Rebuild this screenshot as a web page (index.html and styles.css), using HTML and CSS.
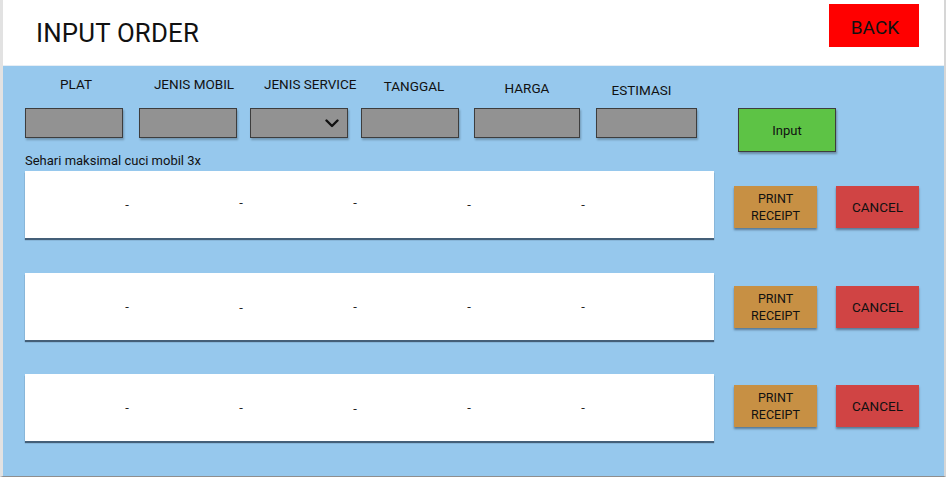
FILE: index.html
```html
<!DOCTYPE html>
<html>
<head>
<meta charset="utf-8">
<link rel="stylesheet" href="styles.css">
</head>
<body>
<div class="app">
  <header class="topbar">
    <h1 class="title">INPUT ORDER</h1>
    <button class="btn-back">BACK</button>
  </header>
  <main class="panel">
    <div class="form-row">
      <div class="field f-plat"><div class="label">PLAT</div><div class="box"></div></div>
      <div class="field f-mobil"><div class="label">JENIS MOBIL</div><div class="box"></div></div>
      <div class="field f-service"><div class="label">JENIS SERVICE</div><div class="box select">
        <svg class="chev" width="14" height="9" viewBox="0 0 14 9"><polyline points="1.5,1.5 7,7 12.5,1.5" fill="none" stroke="#111" stroke-width="2.4" stroke-linecap="round" stroke-linejoin="round"/></svg>
      </div></div>
      <div class="field f-tanggal"><div class="label lbl-low1">TANGGAL</div><div class="box"></div></div>
      <div class="field f-harga"><div class="label lbl-low2">HARGA</div><div class="box"></div></div>
      <div class="field f-estimasi"><div class="label lbl-low3">ESTIMASI</div><div class="box"></div></div>
      <button class="btn-input">Input</button>
    </div>
    <p class="note">Sehari maksimal cuci mobil 3x</p>
    <div class="rows">
      <div class="row row-1">
        <div class="card"><span>-</span><span class="up">-</span><span class="up">-</span><span>-</span><span>-</span></div>
        <button class="btn-print">PRINT<br>RECEIPT</button>
        <button class="btn-cancel">CANCEL</button>
      </div>
      <div class="row row-2">
        <div class="card"><span>-</span><span class="down">-</span><span>-</span><span>-</span><span>-</span></div>
        <button class="btn-print">PRINT<br>RECEIPT</button>
        <button class="btn-cancel">CANCEL</button>
      </div>
      <div class="row row-3">
        <div class="card"><span>-</span><span>-</span><span class="down">-</span><span>-</span><span>-</span></div>
        <button class="btn-print">PRINT<br>RECEIPT</button>
        <button class="btn-cancel">CANCEL</button>
      </div>
    </div>
  </main>
</div>
</body>
</html>
```
FILE: styles.css
```css
* { box-sizing: border-box; }
html, body { margin: 0; padding: 0; background: #ffffff; }
body { font-family: Roboto, "Liberation Sans", sans-serif; color: #111; }

.app {
  width: 946px;
  height: 477px;
  border-left: 3px solid #e2e2e2;
  border-right: 2px solid #d6d6d6;
  border-bottom: 1px solid #8e8e8e;
  display: flex;
  flex-direction: column;
}

.topbar {
  height: 66px;
  background: #fff;
  border-bottom: 1px solid #e6eef5;
  display: flex;
  align-items: flex-start;
  justify-content: space-between;
  padding: 0 25px 0 33px;
}
.title {
  margin: 18px 0 0 0;
  font-size: 25.8px;
  font-weight: 400;
  letter-spacing: 0.2px;
  line-height: 30px;
}
.btn-back {
  margin-top: 4px;
  width: 90px;
  height: 43px;
  background: #ff0000;
  border: 0;
  font-family: inherit;
  font-size: 19px;
  color: #111;
  padding: 4px 0 0 2px;
}

.panel {
  flex: 1;
  background: #96c8ed;
  padding: 10px 0 0 22px;
}

.form-row { display: flex; align-items: flex-start; }
.field { display: flex; flex-direction: column; }
.label {
  font-size: 13.5px;
  line-height: 16px;
  height: 16px;
  text-align: center;
  margin-bottom: 16px;
  white-space: nowrap;
}
.lbl-low1 { transform: translateY(2px); }
.lbl-low2 { transform: translateY(4px); }
.lbl-low3 { transform: translateY(6px); }
.box {
  height: 30px;
  background: #929292;
  border: 1.5px solid #3d3d3d;
  box-shadow: 1px 2px 2px rgba(0,0,0,0.25);
  position: relative;
}
.select { display: flex; align-items: center; justify-content: flex-end; padding-right: 8px; }
.chev { display: block; }

.f-plat { width: 98px; margin-right: 16px; }
.f-plat .label { padding-left: 4px; }
.f-mobil { width: 98px; margin-right: 13px; }
.f-mobil .label { padding-left: 12px; }
.f-service { width: 98px; margin-right: 13px; }
.f-service .label { padding-left: 14px; }
.f-tanggal { width: 98px; margin-right: 15px; }
.f-tanggal .label { padding-left: 8px; }
.f-harga { width: 106px; margin-right: 16px; }
.f-estimasi { width: 101px; margin-right: 41px; }
.f-estimasi .label { padding-right: 10px; }

.btn-input {
  margin-top: 32px;
  width: 98px;
  height: 44px;
  background: #5dc345;
  border: 1.5px solid #3d3d3d;
  box-shadow: 1px 2px 2px rgba(0,0,0,0.3);
  font-family: inherit;
  font-size: 13px;
  color: #111;
  padding: 0;
}

.note {
  margin: 1px 0 0 0;
  font-size: 13px;
  line-height: 16px;
}

.rows {
  margin-top: 2px;
  display: flex;
  flex-direction: column;
  gap: 34.5px;
}
.row { display: flex; align-items: flex-start; }
.card {
  width: 689px;
  height: 67px;
  background: #fff;
  box-shadow: 0 2px 1px rgba(40,60,80,0.75);
  display: grid;
  grid-template-columns: repeat(5, 114px);
  padding-left: 45px;
  align-items: center;
  font-size: 13px;
  color: #222;
}
.card span { text-align: center; color: #222; }
.card .up { transform: translateY(-2px); }
.card .down { transform: translateY(1px); }

.btn-print, .btn-cancel {
  margin-top: 15px;
  width: 83px;
  height: 42px;
  border: 0;
  font-family: inherit;
  color: #111;
  padding: 0;
  box-shadow: 0 2px 2px rgba(40,60,80,0.55);
}
.row-2 .btn-print, .row-2 .btn-cancel { margin-top: 13px; }
.row-3 .btn-print, .row-3 .btn-cancel { margin-top: 11px; }
.btn-print {
  margin-left: 20px;
  background: #c79044;
  font-size: 12.5px;
  line-height: 17px;
}
.btn-cancel {
  margin-left: 19px;
  background: #d04444;
  font-size: 13.5px;
}
```
